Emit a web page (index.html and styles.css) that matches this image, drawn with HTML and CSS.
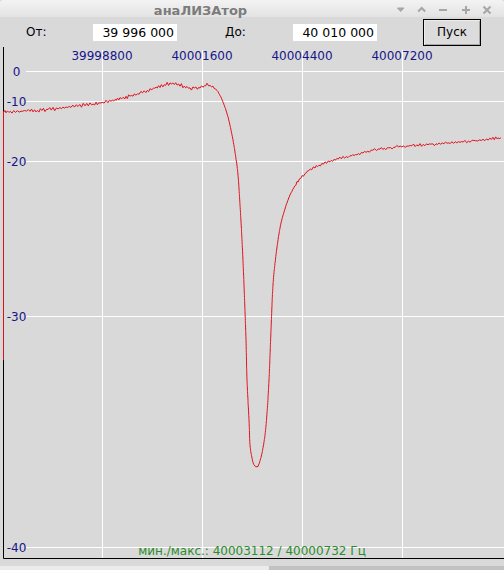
FILE: index.html
```html
<!DOCTYPE html>
<html lang="ru">
<head>
  <meta charset="UTF-8" />
  <title>анаЛИЗАтор</title>
  <link rel="stylesheet" href="styles.css">
</head>
<body>
  <div class="window">
    <div class="titlebar">
      <div class="title">анаЛИЗАтор</div>
      <svg class="wm-buttons" width="114" height="17" viewBox="0 0 114 17">
        <g fill="none" stroke="#a6a6a6" stroke-width="2">
          <path d="M7.5 8 L10.7 11.5 L14 8 Z" fill="#a6a6a6" stroke-width="1" />
          <path d="M28.2 11.5 L31.7 8 L35.2 11.5" />
          <path d="M49 10 L57 10" />
          <path d="M72 10 L80 10 M76 6 L76 14" />
          <path d="M93.5 6.5 L100.5 13.5 M100.5 6.5 L93.5 13.5" />
        </g>
      </svg>
    </div>

    <div class="toolbar">
      <label class="lbl lbl-from" for="from">От:</label>
      <input class="entry" id="from" type="text" value="39 996 000" />
      <label class="lbl lbl-to" for="to">До:</label>
      <input class="entry" id="to" type="text" value="40 010 000" />
      <button class="run">Пуск</button>
    </div>

    <svg class="plot" width="504" height="512" viewBox="0 47 504 512">
      <g class="grid" stroke="#ffffff" stroke-width="1">
        <line x1="102.5" y1="50" x2="102.5" y2="558" />
        <line x1="202.5" y1="50" x2="202.5" y2="558" />
        <line x1="302.5" y1="50" x2="302.5" y2="558" />
        <line x1="402.5" y1="50" x2="402.5" y2="558" />
        <line x1="26" y1="71.5" x2="504" y2="71.5" />
        <line x1="26" y1="101.5" x2="504" y2="101.5" />
        <line x1="26" y1="161.5" x2="504" y2="161.5" />
        <line x1="26" y1="316.5" x2="504" y2="316.5" />
        <line x1="26" y1="547.5" x2="504" y2="547.5" />
      </g>
      <g class="axis-text" text-anchor="middle">
        <text x="102" y="60">39998800</text>
        <text x="202" y="60">40001600</text>
        <text x="302" y="60">40004400</text>
        <text x="402" y="60">40007200</text>
        <text x="16.5" y="75.5">0</text>
        <text x="16.5" y="105.5">-10</text>
        <text x="16.5" y="165.5">-20</text>
        <text x="16.5" y="320.5">-30</text>
        <text x="16.5" y="551.5">-40</text>
      </g>
      <path d="M3.5 47 L3.5 558.5 L504 558.5" fill="none" stroke="#000" stroke-width="1" />
      <polyline id="trace" fill="none" stroke="#e0101a" stroke-width="1" points="" />
      <text class="minmax" x="252" y="555" text-anchor="middle">мин./макс.: 40003112 / 40000732 Гц</text>
    </svg>

    <div class="bottom"><div class="slider"></div></div>
  </div>

  <script>
    // опорные точки кривой (x, y в пикселях окна)
    const pts = [
      [3,112],[30,111],[60,108],[100,103],[120,99],[133,95],[150,90],[160,86],
      [170,84],[180,85],[190,88],[200,88],[207,85],[213,87],[218,92],[223,102],
      [228,117],[232,135],[235,152],[238,175],[240,205],[242,240],[244,285],
      [246,340],[247,380],[249,420],[250,445],[252,458],[254,465],[257,467],
      [259,464],[262,453],[265,435],[267,413],[269,380],[271,330],[273,285],
      [276,255],[280,228],[284,212],[288,200],[292,191],[297,183],[305,174],
      [315,167],[330,161],[350,156],[380,149],[420,145],[460,142],[501,138]
    ];

    let seed = 11;
    function rnd() {
      seed = (seed * 16807) % 2147483647;
      return seed / 2147483647;
    }

    function cr(p0, p1, p2, p3, t) {
      const t2 = t * t, t3 = t2 * t;
      return 0.5 * (2 * p1 + (-p0 + p2) * t + (2 * p0 - 5 * p1 + 4 * p2 - p3) * t2 + (-p0 + 3 * p1 - 3 * p2 + p3) * t3);
    }

    const out = ["3.5,360", "3.5,112"];
    let n = 0;
    for (let i = 0; i < pts.length - 1; i++) {
      const a = pts[Math.max(i - 1, 0)], b = pts[i], c = pts[i + 1], d = pts[Math.min(i + 2, pts.length - 1)];
      const steps = Math.ceil(Math.max(Math.abs(c[0] - b[0]), Math.abs(c[1] - b[1])) / 1.6);
      for (let k = 0; k < steps; k++) {
        const t = k / steps;
        const x = cr(a[0], b[0], c[0], d[0], t);
        let y = cr(a[1], b[1], c[1], d[1], t);
        const amp = x < 215 ? 1.7 : x > 295 ? 1.3 : 0.4;
        y += (n % 2 ? 1 : -1) * amp * rnd() + (rnd() - 0.5) * amp * 0.6;
        n++;
        out.push(x.toFixed(1) + "," + y.toFixed(1));
      }
    }
    out.push("501,138");
    document.getElementById("trace").setAttribute("points", out.join(" "));
  </script>
</body>
</html>
```

FILE: styles.css
```css
body {
  margin: 0;
  background: #d9d9d9;
  font-family: "DejaVu Sans", sans-serif;
  font-size: 12px;
}
.window {
  width: 504px;
  height: 570px;
  overflow: hidden;
}
.titlebar {
  display: flex;
  height: 17px;
  background: linear-gradient(#f3f3f3, #e3e3e3);
  border-radius: 3px 3px 0 0;
}
.title {
  width: 390px;
  padding-left: 11px;
  box-sizing: border-box;
  text-align: center;
  font-weight: bold;
  font-size: 13px;
  line-height: 21px;
  height: 17px;
  color: #7c7c7c;
}
.wm-buttons {
  display: block;
}
.toolbar {
  display: flex;
  align-items: center;
  height: 30px;
}
.lbl {
  color: #000;
  box-sizing: border-box;
}
.lbl-from {
  margin-left: 26px;
  width: 67px;
}
.lbl-to {
  width: 116px;
  padding-left: 48px;
}
.entry {
  width: 84px;
  height: 17px;
  box-sizing: border-box;
  border: none;
  padding: 0 3px 0 0;
  margin: 0;
  background: #fff;
  text-align: right;
  font-family: "DejaVu Sans", sans-serif;
  font-size: 12.5px;
  color: #000;
}
.run {
  margin-left: 46px;
  width: 58px;
  height: 27px;
  padding: 0;
  border: 1px solid #000;
  box-shadow: inset 1px 1px 0 #ececec, inset -1px -1px 0 #a8a8a8;
  background: #dcdcdc;
  font-family: "DejaVu Sans", sans-serif;
  font-size: 12px;
  color: #000;
}
.plot {
  display: block;
}
.axis-text {
  fill: #16168a;
  font-size: 12px;
}
.minmax {
  fill: #2a8c2a;
  font-size: 12px;
}
.bottom {
  height: 11px;
  display: flex;
  align-items: flex-end;
  background: #c2c2c2;
  background-clip: content-box;
  padding-top: 7px;
  box-sizing: border-box;
}
.slider {
  width: 269px;
  height: 4px;
  background: #ebebeb;
}
```
